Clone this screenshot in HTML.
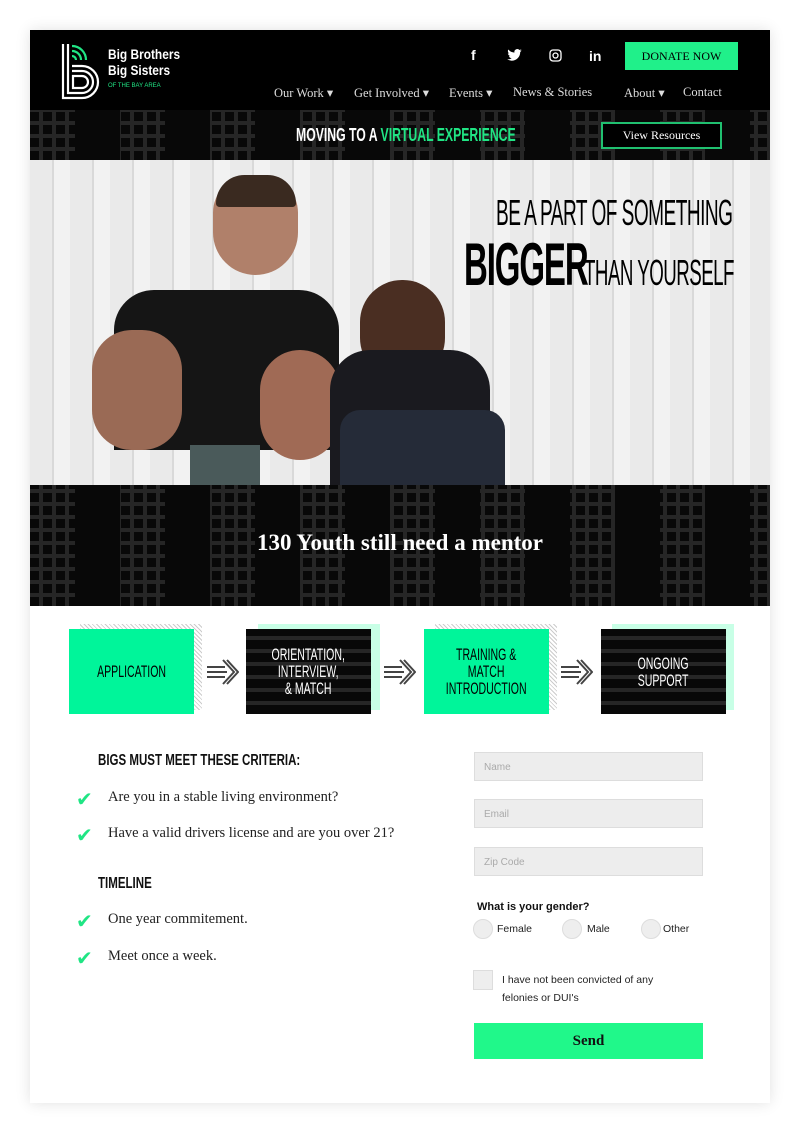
<!DOCTYPE html>
<html><head><meta charset="utf-8"><style>
*{margin:0;padding:0;box-sizing:border-box}
body{width:800px;height:1133px;background:#fff;font-family:"Liberation Serif",serif;position:relative;overflow:hidden}
.card{position:absolute;left:30px;top:30px;width:740px;height:1073px;background:#fff;box-shadow:0 0 14px rgba(0,0,0,.12)}
.abs{position:absolute}
.pat2{background-color:#080808;background-image:
repeating-linear-gradient(0deg,transparent 0 9px,#262626 9px 13px);
background-size:100% 100%}
.pat3{background-color:#080808;background-image:
linear-gradient(90deg,transparent 0 50%,#080808 50% 100%),
repeating-linear-gradient(0deg,transparent 0 9px,#262626 9px 13px),
repeating-linear-gradient(90deg,transparent 0 9px,#262626 9px 13px);
background-size:90px 100%,100% 100%,100% 100%}
.cond{font-family:"Liberation Sans",sans-serif;transform-origin:left top}
.nav{color:#ddd;font-size:12.5px;top:85px}
.step{width:125px;height:85px;display:flex;align-items:center;justify-content:center;text-align:center}
.step span{display:inline-block;font-family:"Liberation Sans",sans-serif;font-size:17px;line-height:17px;transform:scaleX(.62);white-space:nowrap}
.inp{left:444px;width:229px;height:29px;background:#ededed;border:1px solid #ddd;font-family:"Liberation Sans",sans-serif;font-size:10px;color:#aaa;padding:9px 0 0 9px}
.chk{left:46px;color:#20e584;font-size:20px;font-family:"DejaVu Sans",sans-serif}
.li{left:78px;font-size:14.5px;color:#222}
.rad{width:20px;height:20px;border-radius:50%;background:#eee;border:1px solid #ddd}
.sf{font-family:"Liberation Sans",sans-serif;font-size:10.5px;color:#222}
</style></head><body>
<div class="card">
 <div class="abs" style="left:0;top:0;width:740px;height:80px;background:#000"></div>
 <svg class="abs" style="left:30px;top:12px" width="44" height="58" viewBox="0 0 44 58">
  <g fill="none" stroke="#fff" stroke-width="2.2">
   <path d="M3 2V56H22A16 16 0 0 0 22 24H12"/>
   <path d="M8 2V51H22A11 11 0 0 0 22 29H12"/>
   <path d="M13 34H22A6 6 0 0 1 22 46H13Z"/>
  </g>
  <g fill="none" stroke="#20e584" stroke-width="2.2"><path d="M12 4A14 14 0 0 1 26 18"/><path d="M12 9A9 9 0 0 1 21 18"/><path d="M12 14A4 4 0 0 1 16 18"/></g>
 </svg>
 <div class="abs" style="left:78px;top:16px;color:#fff;font-family:'Liberation Sans',sans-serif;font-size:14px;font-weight:bold;line-height:16px;transform:scaleX(.85);transform-origin:left">Big Brothers<br>Big Sisters</div>
 <div class="abs" style="left:78px;top:53px;color:#20e584;font-family:'Liberation Sans',sans-serif;font-size:6px">OF THE BAY AREA</div>
 <div class="abs" style="left:441px;top:17px;color:#fff;font:bold 14px 'Liberation Sans',sans-serif">f</div>
 <svg class="abs" style="left:477px;top:19px" width="15" height="12" viewBox="0 0 24 20"><path fill="#fff" d="M24 2.4c-.9.4-1.8.6-2.8.8 1-.6 1.800-1.6 2.2-2.7-1 .6-2 1-3.1 1.2A4.9 4.9 0 0 0 11.9 6 14 14 0 0 1 1.7.9a4.9 4.9 0 0 0 1.5 6.6c-.8 0-1.6-.2-2.2-.6 0 2.4 1.7 4.4 3.9 4.800-.7.2-1.5.2-2.2.1.6 2 2.4 3.4 4.6 3.4A9.9 9.9 0 0 1 0 17.3 14 14 0 0 0 7.5 19.5c9.1 0 14-7.5 14-14v-.6c1-.7 1.8-1.6 2.5-2.5z"/></svg>
 <svg class="abs" style="left:519px;top:19px" width="13" height="13" viewBox="0 0 13 13"><rect x="1" y="1" width="11" height="11" rx="3" fill="none" stroke="#fff" stroke-width="1.3"/><circle cx="6.5" cy="6.5" r="2.5" fill="none" stroke="#fff" stroke-width="1.3"/></svg>
 <div class="abs" style="left:559px;top:18px;color:#fff;font:bold 14px 'Liberation Sans',sans-serif">in</div>
 <div class="abs" style="left:595px;top:12px;width:113px;height:28px;background:#20f08a;color:#000;font-size:12px;text-align:center;line-height:28px">DONATE NOW</div>
 <div class="abs nav" style="left:244px;top:55px">Our Work ▾</div>
 <div class="abs nav" style="left:324px;top:55px">Get Involved ▾</div>
 <div class="abs nav" style="left:419px;top:55px">Events ▾</div>
 <div class="abs nav" style="left:483px;top:55px">News &amp; Stories</div>
 <div class="abs nav" style="left:594px;top:55px">About ▾</div>
 <div class="abs nav" style="left:653px;top:55px">Contact</div>
 <div class="abs pat3" style="left:0;top:80px;width:740px;height:50px"></div>
 <div class="abs cond" style="left:266px;top:95px;color:#fff;font-size:18px;font-weight:bold;transform:scaleX(.68);white-space:nowrap">MOVING TO A <span style="color:#20e584">VIRTUAL EXPERIENCE</span></div>
 <div class="abs" style="left:571px;top:92px;width:121px;height:27px;border:2px solid #20c070;background:#000;color:#fff;font-size:12px;text-align:center;line-height:23px">View Resources</div>
 <div class="abs" style="left:0;top:130px;width:740px;height:325px;background:repeating-linear-gradient(90deg,#eaeaea 0 22px,#d9d9d9 22px 24px,#f2f2f2 24px 40px)"></div>
 <div class="abs" style="left:84px;top:260px;width:225px;height:160px;background:#151515;border-radius:40px 40px 0 0"></div>
 <div class="abs" style="left:183px;top:145px;width:85px;height:100px;background:#b0806a;border-radius:40px 40px 45px 45px"></div>
 <div class="abs" style="left:186px;top:145px;width:80px;height:32px;background:#3a2a20;border-radius:40px 40px 5px 5px"></div>
 <div class="abs" style="left:62px;top:300px;width:90px;height:120px;background:#9a6a55;border-radius:40px"></div>
 <div class="abs" style="left:230px;top:320px;width:80px;height:110px;background:#a06a55;border-radius:40px"></div>
 <div class="abs" style="left:160px;top:415px;width:70px;height:40px;background:#4a5a5a"></div>
 <div class="abs" style="left:330px;top:250px;width:85px;height:100px;background:#4a2e22;border-radius:42px"></div>
 <div class="abs" style="left:300px;top:320px;width:160px;height:135px;background:#1a1a1f;border-radius:40px 40px 0 0"></div>
 <div class="abs" style="left:310px;top:380px;width:165px;height:75px;background:#252b38;border-radius:20px 20px 0 0"></div>
 <div class="abs cond" style="left:466px;top:162px;font-size:36px;color:#000;transform:scaleX(.53);white-space:nowrap;letter-spacing:-1px">BE A PART OF SOMETHING</div>
 <div class="abs cond" style="left:434px;top:200px;font-size:60px;font-weight:bold;color:#000;transform:scaleX(.55);white-space:nowrap;letter-spacing:-2px">BIGGER</div>
 <div class="abs cond" style="left:554px;top:222px;font-size:36px;color:#000;transform:scaleX(.52);white-space:nowrap;letter-spacing:-1px">THAN YOURSELF</div>
 <div class="abs pat3" style="left:0;top:455px;width:740px;height:121px"></div>
 <div class="abs" style="left:0;top:500px;width:740px;text-align:center;color:#fff;font-size:23px;font-weight:bold">130 Youth still need a mentor</div>
 <div class="abs" style="left:50px;top:594px;width:122px;height:86px;background:repeating-linear-gradient(45deg,#ccc 0 1px,#fff 1px 3px)"></div>
 <div class="abs step" style="left:39px;top:599px;background:#00f59a;color:#000"><span>APPLICATION</span></div>
 <div class="abs" style="left:228px;top:594px;width:122px;height:86px;background:#c8ffe6"></div>
 <div class="abs step pat2" style="left:216px;top:599px;color:#fff"><span>ORIENTATION,<br>INTERVIEW,<br>&amp; MATCH</span></div>
 <div class="abs" style="left:405px;top:594px;width:122px;height:86px;background:repeating-linear-gradient(45deg,#ccc 0 1px,#fff 1px 3px)"></div>
 <div class="abs step" style="left:394px;top:599px;background:#00f59a;color:#000"><span>TRAINING &amp;<br>MATCH<br>INTRODUCTION</span></div>
 <div class="abs" style="left:582px;top:594px;width:122px;height:86px;background:#c8ffe6"></div>
 <div class="abs step pat2" style="left:571px;top:599px;color:#fff"><span>ONGOING<br>SUPPORT</span></div>
 <svg class="abs" style="left:177px;top:628px" width="32" height="28" viewBox="0 0 32 28"><g stroke="#444" stroke-width="2" fill="none"><path d="M0 9H18M0 14H20M0 19H18"/><path d="M16 2L27 14L16 26M20 2L31 14L20 26"/></g></svg>
 <svg class="abs" style="left:354px;top:628px" width="32" height="28" viewBox="0 0 32 28"><g stroke="#444" stroke-width="2" fill="none"><path d="M0 9H18M0 14H20M0 19H18"/><path d="M16 2L27 14L16 26M20 2L31 14L20 26"/></g></svg>
 <svg class="abs" style="left:531px;top:628px" width="32" height="28" viewBox="0 0 32 28"><g stroke="#444" stroke-width="2" fill="none"><path d="M0 9H18M0 14H20M0 19H18"/><path d="M16 2L27 14L16 26M20 2L31 14L20 26"/></g></svg>
 <div class="abs cond" style="left:68px;top:722px;font-size:16px;font-weight:bold;color:#111;transform:scaleX(.72);white-space:nowrap">BIGS MUST MEET THESE CRITERIA:</div>
 <div class="abs chk" style="top:757px">✔</div><div class="abs li" style="top:759px">Are you in a stable living environment?</div>
 <div class="abs chk" style="top:793px">✔</div><div class="abs li" style="top:795px">Have a valid drivers license and are you over 21?</div>
 <div class="abs cond" style="left:68px;top:845px;font-size:16px;font-weight:bold;color:#111;transform:scaleX(.72)">TIMELINE</div>
 <div class="abs chk" style="top:879px">✔</div><div class="abs li" style="top:881px">One year commitement.</div>
 <div class="abs chk" style="top:916px">✔</div><div class="abs li" style="top:918px">Meet once a week.</div>
 <div class="abs inp" style="top:722px">Name</div>
 <div class="abs inp" style="top:769px">Email</div>
 <div class="abs inp" style="top:817px">Zip Code</div>
 <div class="abs" style="left:447px;top:871px;font:bold 11px 'Liberation Sans',sans-serif;color:#111">What is your gender?</div>
 <div class="abs rad" style="left:443px;top:889px"></div><div class="abs sf" style="left:467px;top:893px">Female</div>
 <div class="abs rad" style="left:532px;top:889px"></div><div class="abs sf" style="left:557px;top:893px">Male</div>
 <div class="abs rad" style="left:611px;top:889px"></div><div class="abs sf" style="left:633px;top:893px">Other</div>
 <div class="abs" style="left:443px;top:940px;width:20px;height:20px;background:#eee;border:1px solid #ddd"></div>
 <div class="abs sf" style="left:472px;top:941px;line-height:18px">I have not been convicted of any<br>felonies or DUI's</div>
 <div class="abs" style="left:444px;top:993px;width:229px;height:36px;background:#20f88a;text-align:center;line-height:36px;font-size:15px;font-weight:bold;color:#111">Send</div>
</div>
</body></html>
